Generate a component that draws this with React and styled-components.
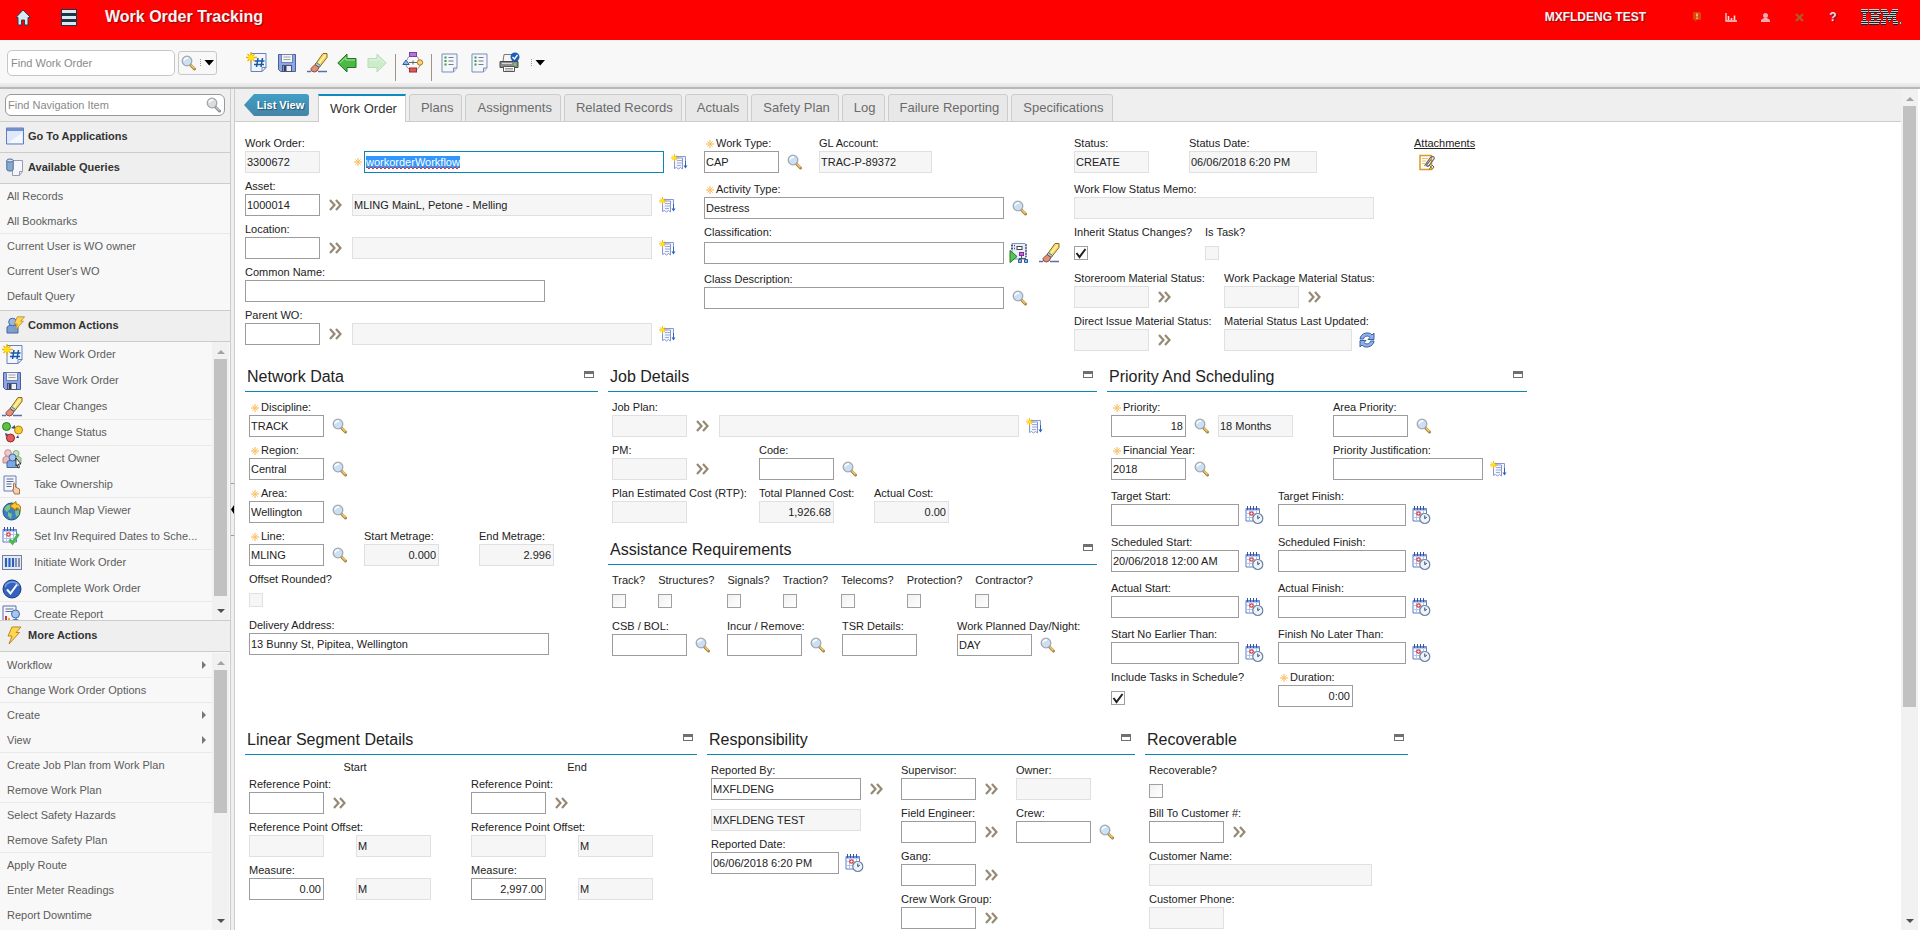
import React, { useEffect, useId, useRef } from "react";
import styled, { createGlobalStyle, css } from "styled-components";

const GlobalStyle = createGlobalStyle`
  * { box-sizing: border-box; }
  body {
    margin: 0;
    background: #fff;
    color: #222;
    font: 11px/15px "Liberation Sans", Arial, sans-serif;
  }
  button, input { font: inherit; color: inherit; }
  button { margin: 0; padding: 0; border: 0; background: none; cursor: pointer; }
  svg { display: block; flex: none; }
`;

/* ---------- icons ---------- */

const Svg = ({ w = 20, h = w, children }) => (
  <svg width={w} height={h} viewBox={`0 0 ${w} ${h}`} fill="none" aria-hidden="true">{children}</svg>
);

const Spark = () => (
  <g>
    <path d="M5 0v11M0 5.500h11M1.500 2l7 7M8.500 2l-7 7" stroke="#f5b000" strokeWidth="1.300" />
    <circle cx="5" cy="5.500" r="2.500" fill="#ffe600" />
  </g>
);

const NewIcon = () => (
  <Svg w={22} h={21}>
    <path d="M5 1.500h15v14l-4 4H5z" fill="#f3f6ff" stroke="#6a83b5" />
    <path d="M20 15.500h-4v4z" fill="#fff" stroke="#6a83b5" />
    <path d="M12 6l-1.500 9M16.500 6L15 15M8.500 9h10M8 12.500h10" stroke="#1659a8" strokeWidth="1.500" />
    <Spark />
  </Svg>
);

const SaveIcon = () => (
  <Svg>
    <path d="M1.500 1.500h17v17h-15l-2-2z" fill="#8ba6e2" stroke="#4a5f9c" />
    <rect x="4.500" y="1.500" width="11" height="8" fill="#f4f4f4" stroke="#7082b4" />
    <path d="M6.500 4h7M6.500 6.500h7" stroke="#a3a3a3" />
    <rect x="5.500" y="12.500" width="9" height="6" fill="#eef0f5" stroke="#47537a" />
    <path d="M8 13v5" stroke="#333f66" strokeWidth="3" />
  </Svg>
);

const EraserIcon = () => (
  <Svg w={21} h={20}>
    <path d="M0 18.500h4M11 18.500h9" stroke="#5870a8" strokeWidth="1.500" />
    <path d="M16 .5h4v4L12.500 14l-4-3z" fill="#f8d867" stroke="#8a6b1e" />
    <path d="M18.300 2L11 11.500" stroke="#fff3b8" strokeWidth="1.300" />
    <path d="M9.500 9.500l4 3-1.500 2-4-3z" fill="#a9cfcc" stroke="#4f7775" />
    <path d="M8 11.500l4 3-2 3.500-2.500 1-3-1L4 15.500z" fill="#df907b" stroke="#8c4536" />
  </Svg>
);

const ArrowIcon = ({ pale, flip }) => (
  <Svg>
    <g transform={flip ? "matrix(-1 0 0 1 20 0)" : undefined}>
      <path d="M.8 10L10 1v4.500h9v9h-9V19z" fill={pale ? "#cdeccb" : "#4db845"} stroke={pale ? "#b4dfb3" : "#1a7a1c"} />
      <path d="M3 10l6-5.500V7h9" stroke={pale ? "#e3f6e2" : "#a6e79a"} />
    </g>
  </Svg>
);

const FlowIcon = () => (
  <Svg w={22} h={21}>
    <path d="M5 8c1-3 2-4 5-5M17 8c-1-3-2-4-4-5M4 13c1 3 3 4 5 5M18 13c-1 3-2 4-4 5" stroke="#999" />
    <path d="M7 10.500h8M11 8.500v4" stroke="#666" />
    <rect x="7.500" y=".5" width="7" height="4" fill="#b276d8" stroke="#7b3ea7" />
    <path d="M.8 12.500L4 8l3.200 4.500z" fill="#8db7ea" stroke="#2d5fa5" />
    <circle cx="18" cy="10.500" r="2.700" fill="#f9d27a" stroke="#b57a12" />
    <rect x="7.500" y="16" width="7" height="4" fill="#dd5b5b" stroke="#a22a2a" />
  </Svg>
);

const ReportIcon = () => (
  <Svg w={17} h={20}>
    <path d="M1 1h15v14l-3.500 4H1z" fill="#f4f6fd" stroke="#7c8db5" />
    <path d="M16 15h-3.500v4" fill="#dde3f2" stroke="#7c8db5" />
    <path d="M3.500 4.500h2M3.500 8h2M3.500 11.500h2" stroke="#3b9c3b" strokeWidth="2" />
    <path d="M7.500 4.500h5M7.500 8h5M7.500 11.500h5" stroke="#7b7b7b" />
  </Svg>
);

const PrinterIcon = () => (
  <Svg w={21} h={21}>
    <path d="M5 2.500h10l1 7H4z" fill="#f5f5f5" stroke="#777" />
    <path d="M1 9.500h18v6H1z" fill="#8c8c8c" stroke="#484848" />
    <path d="M3 11.500h10" stroke="#d8d8d8" />
    <path d="M15 12.500h2" stroke="#5ee05e" strokeWidth="2" />
    <path d="M4.500 14.500h11v5h-11z" fill="#fff" stroke="#555" />
    <path d="M6 16.500h8M6 18h8" stroke="#999" />
    <circle cx="16" cy="5" r="4.500" fill="#1c5fb5" />
    <path d="M13.500 5l2 2 3-4" stroke="#fff" strokeWidth="1.300" />
  </Svg>
);

const SearchIcon = ({ gray }) => (
  <Svg w={15} h={16}>
    <path d="M9 9.500l4.500 4.500" stroke={gray ? "#8c8c8c" : "#a98543"} strokeWidth="3" strokeLinecap="round" />
    <path d="M10 10l3.500 3.500" stroke={gray ? "#c9c9c9" : "#f5cb69"} strokeWidth="1.500" />
    <circle cx="6" cy="6" r="4.800" fill={gray ? "#dcdcdc" : "#cbe0f4"} stroke="#a3a8ae" strokeWidth="1.300" />
    <path d="M3 5.500C3.500 3.500 5 3 7 3" stroke="#fff" strokeWidth="1.400" />
  </Svg>
);

const DetailIcon = () => (
  <Svg w={13} h={12}>
    <path d="M1 1l4.500 5L1 11M7 1l4.500 5L7 11" stroke="#978974" strokeWidth="2.200" />
  </Svg>
);

const NoteIcon = () => (
  <Svg w={17} h={17}>
    <path d="M4 2.500h10.500v6M3.500 4v10.500l2-1 2 1.500 2-1.500 2 1.500V4z" fill="#f2f5fd" stroke="#8698cf" />
    <path d="M6 6.500h5M6 9h5M6 11.500h4" stroke="#9dacd6" />
    <path d="M14.500 7v6" stroke="#2f62bd" />
    <path d="M12.500 11.500h4l-2 3z" fill="#2f62bd" />
    <g transform="scale(.7)"><Spark /></g>
  </Svg>
);

const CalendarIcon = ({ check }) => (
  <Svg w={19} h={19}>
    <path d="M1 2.500h13.500V15H1z" fill="#fff" stroke="#5a7cc8" />
    <path d="M1 3.500h13.500" stroke="#7d9ade" strokeWidth="2" />
    <path d="M2.500 0v4M5.500 0v4M8.500 0v4M11.500 0v4" stroke="#35569f" />
    <path d="M1 7.500h13M1 11.500h13M4.500 5v10M8 5v10M11.500 5v10" stroke="#b0c3ec" />
    <circle cx="6.500" cy="7.500" r="1.700" fill="#fff" stroke="#dd3838" strokeWidth="1.200" />
    {check ? (
      <path d="M7.500 12.500l3 3.500 6-9" stroke="#4fb551" strokeWidth="3" />
    ) : (
      <g>
        <circle cx="12.800" cy="12.500" r="5" fill="#eef4fb" stroke="#6b829e" strokeWidth="1.200" />
        <path d="M12.800 9.500v3.200l2-1.500" stroke="#33445c" />
      </g>
    )}
  </Svg>
);

const ClassifyIcon = () => (
  <Svg w={20} h={20}>
    <path d="M3 .5h13l1 1V15l-1 1H3z" fill="#e8eefa" stroke="#7f93bd" />
    <path d="M17 1v13M2 2.500h4M2 5.500h4" stroke="#4d5870" strokeDasharray="2 1" strokeWidth="1.300" />
    <rect x="8" y="3.500" width="5" height="3" fill="#fff" stroke="#444" />
    <path d="M1 7.500l7 6-7 6z" fill="#58c454" stroke="#1e7a20" />
    <path d="M12.500 12v4M10 15.500h7" stroke="#555" />
    <rect x="10.500" y="9.500" width="4" height="3" fill="#c06bd6" stroke="#7c2c94" />
    <path d="M9.500 16.500h3v3h-3zM15.500 16.500h3v3h-3z" fill="#8db7ee" stroke="#2d5fa5" />
  </Svg>
);

const RefreshIcon = () => (
  <Svg w={16} h={16}>
    <path d="M1 7c.5-6 9-8 12-4l2-2v6.500H9L11 5.500C9 3 5 4 4.500 7z" fill="#8fb1e6" stroke="#3a61a3" />
    <path d="M15 9c-.5 6-9 8-12 4l-2 2V8.500h6L5 10.500c2 2.500 6 1.500 6.500-1.500z" fill="#8fb1e6" stroke="#3a61a3" />
  </Svg>
);

const AttachIcon = () => (
  <Svg w={17} h={17}>
    <path d="M1 1.500h11.500v14H1z" fill="#fffdf4" stroke="#db9a25" strokeWidth="1.500" />
    <path d="M3 4.500h6M3 7h4M3 9.500h3" stroke="#e3c37c" />
    <path d="M5.500 12l6-8.500c2-2 4.500-.5 3.500 1.500l-5 6.500c-1.500 1.500-3 .5-2-1l4-5" stroke="#686868" strokeWidth="1.200" />
    <path d="M10 11l2 2-2 2.500M13 11l2 2-2 2.500" stroke="#6a6152" />
  </Svg>
);

const WindowIcon = () => (
  <Svg w={18} h={18}>
    <path d="M.5 1h17v16H.5z" fill="#dfe9fb" stroke="#5f7fb8" />
    <path d="M1 2.500h16" stroke="#6f8fce" strokeWidth="3" />
    <path d="M2 16L16 6v10z" fill="#f5f8ff" />
  </Svg>
);

const QueryIcon = () => (
  <Svg w={18} h={18}>
    <path d="M6.500 2.500h10v11l-3 4h-7z" fill="#f5f5fa" stroke="#9a9ab0" />
    <path d="M16.500 13.500h-3v4" stroke="#9a9ab0" />
    <path d="M.8 2.500v9c0 2 6.400 2 6.400 0v-9z" fill="#88a9cf" stroke="#4c6d99" />
    <ellipse cx="4" cy="2.500" rx="3.200" ry="1.500" fill="#d6e4f3" stroke="#4c6d99" />
  </Svg>
);

const Bolt = () => <path d="M8 1h9l-5 5.500h3.500L5 18l3-8H4z" fill="#ffd84d" stroke="#b9862a" />;
const BoltIcon = () => <Svg w={18} h={19}><g transform="translate(-2 0)"><Bolt /></g></Svg>;

const UserBoltIcon = () => (
  <Svg w={20} h={18}>
    <path d="M1 17v-6l3-2h5l3 2v6z" fill="#7d9fd6" stroke="#4466a3" />
    <circle cx="6.500" cy="6" r="3.800" fill="#9bb8e4" stroke="#4466a3" />
    <g transform="translate(5 0) scale(.8)"><Bolt /></g>
  </Svg>
);

const StatusIcon = () => (
  <Svg w={21} h={21}>
    <path d="M9 6l4-3v4zM16 13l-2 3 3 0zM3 11l3 1-2 3z" fill="#2c4f90" />
    <circle cx="4.500" cy="4.500" r="4" fill="#5cc244" stroke="#277d1b" />
    <circle cx="16.500" cy="8" r="4" fill="#f7cc35" stroke="#b0840b" />
    <circle cx="8.500" cy="16" r="4" fill="#e25b58" stroke="#9c2422" />
  </Svg>
);

const OwnerIcon = () => (
  <Svg w={20} h={20}>
    <path d="M1 14V9l3-2h4l3 2v5z" fill="#e8b9bd" stroke="#c18a90" />
    <circle cx="6" cy="4" r="3.300" fill="#efc8cb" stroke="#c18a90" />
    <path d="M10 13V9l3-2h3l3 2v5z" fill="#b5dab3" stroke="#7fae7c" />
    <circle cx="14" cy="4.500" r="3" fill="#c4e3c2" stroke="#7fae7c" />
    <path d="M5 18.500V13l3-2h5l3 2v5.500z" fill="#7ea8de" stroke="#3d67a5" />
    <circle cx="10.500" cy="8.500" r="3.500" fill="#a3c3ec" stroke="#3d67a5" />
    <path d="M14 9l5 6h-2.500l1 3.500-1.500.5-1-3.500-1 1.500z" fill="#fff" stroke="#111" strokeWidth=".8" />
  </Svg>
);

const OwnershipIcon = () => (
  <Svg w={19} h={20}>
    <path d="M2 1h12v15H2z" fill="#f3f6fd" stroke="#687fb3" />
    <path d="M4.500 4h7M4.500 6.500h7M4.500 9h5M4.500 11.500h5" stroke="#5b6b91" />
    <path d="M11.500 8.500c1-1 2 0 2 1.500v2l4 2v5h-5l-2-4.500h1z" fill="#f4cfb2" stroke="#a8734e" />
  </Svg>
);

const GlobeIcon = () => (
  <Svg w={20} h={20}>
    <circle cx="9.500" cy="10.500" r="8.500" fill="#3f7fc1" stroke="#1e4c80" />
    <path d="M2 8c2-4 5-5 7-4l-1 4-3 3zM6 11l4 2-1 5-3-3zM13 10l4-1v5l-3 2z" fill="#7cc486" />
    <path d="M8 5l6-4.500V3c4 0 5.500 3 4 7-1-2-2-3-4-3v2.500z" fill="#ffc52e" stroke="#a87608" />
  </Svg>
);

const BarcodeIcon = () => (
  <Svg w={20} h={15}>
    <rect x=".5" y=".5" width="19" height="14" fill="#e4ebf7" stroke="#73809b" />
    <path d="M4 3v9M7.500 3v9M11 3v9" stroke="#2c60bd" strokeWidth="2.200" />
    <path d="M14 3v9M17 3v9" stroke="#8392b0" strokeWidth="2" />
  </Svg>
);

const DoneIcon = () => (
  <Svg w={20} h={20}>
    <circle cx="10" cy="10" r="9" fill="#3362bf" stroke="#1c3c80" />
    <path d="M3 8c2-6 11-7 14-1" stroke="#7ea0e2" strokeWidth="1.500" />
    <path d="M5 10.500l3.500 4 6.500-9" stroke="#fff" strokeWidth="2" />
  </Svg>
);

const ChartDocIcon = () => (
  <Svg w={20} h={20}>
    <path d="M1 1h13v18H1z" fill="#f3f6fd" stroke="#5670aa" />
    <path d="M3.500 4h8M3.500 6.500h8" stroke="#5b6b91" />
    <path d="M4 11v6" stroke="#d33" strokeWidth="2" />
    <path d="M7 13v4" stroke="#e6ae22" strokeWidth="2" />
    <circle cx="13.500" cy="9" r="4" fill="#a8c6ec" stroke="#3d67a5" />
    <path d="M8 19c0-6 11-6 11 0z" fill="#86a9da" stroke="#3d67a5" />
  </Svg>
);

const HomeIcon = () => (
  <Svg w={16} h={17}>
    <path d="M8 1L1 8.500h2V16h3.500v-5h3v5H13V8.500h2.500z" fill="#dce8ef" stroke="#26455c" />
  </Svg>
);

const MenuIcon = () => (
  <Svg w={16} h={17}>
    <path d="M0 0h16v17H0z" fill="#1c3648" />
    <path d="M1 1h14v3H1zM1 7h14v3H1zM1 13h14v3H1z" fill="#dfe8ee" />
  </Svg>
);

const BulletinIcon = () => (
  <Svg w={9} h={10}>
    <path d="M1 0h6l1 1v6l-1 1H4L2.500 10 2 8H1L0 7V1z" fill="#d8490c" />
    <path d="M4 1.500v3M4 5.500v1.500" stroke="#ffd7a0" strokeWidth="1.400" />
  </Svg>
);

const KpiIcon = () => (
  <Svg w={12} h={9}>
    <path d="M1 0v8h11" stroke="#f5dcdc" strokeWidth="1.300" />
    <path d="M3.500 3v4M6.500 5v2M9.500 2.500v4.500" stroke="#f5dcdc" strokeWidth="1.600" />
  </Svg>
);

const PersonIcon = () => (
  <Svg w={9} h={9}>
    <circle cx="4.500" cy="2.500" r="2.500" fill="#f1a9b4" />
    <path d="M0 9V7l3-2h3l3 2v2z" fill="#f1a9b4" />
  </Svg>
);

const SignOutIcon = () => (
  <Svg w={9} h={9}>
    <path d="M1 1l7 7M8 1L1 8" stroke="#b05a2c" strokeWidth="2.400" />
  </Svg>
);

const LogoMark = () => {
  const rows = [
    "0-7 8-18 20-26 31-37",
    "0-7 8-19 20-27 30-37",
    "2-5 10-13 16-20 22-28 29-35",
    "2-5 10-18 22-35",
    "2-5 10-18 22-25 26-31 32-35",
    "2-5 10-13 16-20 22-25 27-30 32-35",
    "0-7 8-19 20-25 28-29 32-37",
    "0-7 8-18 20-25 32-37",
  ];
  return (
    <Svg w={41} h={17}>
      {rows.map((row, y) =>
        row.split(" ").map((part) => {
          const [a, b] = part.split("-").map(Number);
          return (
            <g key={part}>
              <rect x={a} y={y * 2} width={b - a} height="1" fill="#c3cfd1" />
              <rect x={a} y={y * 2 + 1} width={b - a} height="1" fill="#14262b" />
            </g>
          );
        })
      )}
      <circle cx="39.500" cy="14" r="1.200" fill="#d9e4e6" stroke="#14262b" strokeWidth=".6" />
    </Svg>
  );
};

const RequiredMark = () => (
  <Svg w={8} h={8}>
    <path d="M4 0v8M0 4h8" stroke="#fbb040" />
    <path d="M1.300 1.300l5.400 5.400M6.700 1.300L1.300 6.700" stroke="#fcc36e" />
  </Svg>
);

const DropIcon = () => (
  <Svg w={14} h={8}>
    <path d="M.5 0v8" stroke="#999" strokeDasharray="1 1" />
    <path d="M4.500 1h9.500L9.200 6.500z" fill="#000" />
  </Svg>
);

const Triangle = ({ dir, color }) => (
  <Svg w={dir === "right" ? 4 : 8} h={dir === "right" ? 8 : 5}>
    <path d={{ up: "M0 5l4-4 4 4z", down: "M0 0l4 4 4-4z", right: "M0 0l4 4-4 4z" }[dir]} fill={color} />
  </Svg>
);

/* ---------- frame ---------- */

const Shell = styled.div`
  display: flex;
  flex-direction: column;
  height: 100vh;
  min-height: 600px;
  overflow: hidden;
`;

const Header = styled.header`
  flex: none;
  display: flex;
  align-items: center;
  height: 40px;
  padding: 0 18px 6px 15px;
  background: #fe0000;
  color: #f4f4f4;
`;

const HeaderButton = styled.button`
  display: flex;
  justify-content: center;
  width: 16px;
  margin-right: ${(p) => p.$after || 0}px;
`;

const AppTitle = styled.h1`
  flex: 1;
  margin: 0;
  font-size: 16px;
  line-height: 20px;
  text-shadow: 1px 1px 1px #7a1010;
`;

const UserName = styled.span`
  margin-right: 43px;
  font-size: 12px;
  font-weight: bold;
  text-shadow: 1px 1px 1px #7a1010;
`;

const HeaderTools = styled.nav`
  display: flex;
  align-items: center;
  gap: 18px;
  margin-right: 20px;
`;

const HelpMark = styled.b`
  font-size: 12px;
  color: #f3d9e0;
  text-shadow: 1px 1px 0 #7a2a44;
`;

const Toolbar = styled.div`
  flex: none;
  display: flex;
  align-items: center;
  height: 49px;
  padding: 0 7px 2px;
  background: linear-gradient(#f8f8f8 43px, #efefef 43px, #e2e2e2 47px);
  border-bottom: 2px solid #b8b8b8;
`;

const ToolSearch = styled.input`
  width: 168px;
  height: 26px;
  margin-right: 3px;
  padding: 0 3px;
  border: 1px solid #c6c6c6;
  border-radius: 5px;
  background: #fff;
  &::placeholder { color: #8a8a8a; }
`;

const SplitButton = styled.button`
  display: flex;
  align-items: center;
  justify-content: space-between;
  width: 39px;
  height: 24px;
  margin-right: 25px;
  padding: 0 2px;
  border: 1px solid #c8c8c8;
  border-radius: 3px;
`;

const ToolButton = styled.button`
  display: flex;
  align-items: center;
  justify-content: center;
  width: ${(p) => p.$w || 30}px;
  height: 26px;
`;

const Divider = styled.span`
  align-self: flex-end;
  width: 1px;
  height: 27px;
  margin: 0 2px 4px 3px;
  background: #9a9686;
`;

const Body = styled.div`
  flex: 1;
  display: flex;
  min-height: 0;
`;

const Sidebar = styled.aside`
  flex: none;
  display: flex;
  flex-direction: column;
  width: 230px;
  background: #f8f8f8;
`;

const NavSearch = styled.div`
  flex: none;
  height: 33px;
  padding: 5px;
  border-bottom: 1px solid #ccc;
  background: #efefef;
`;

const NavSearchBox = styled.div`
  display: flex;
  align-items: center;
  height: 22px;
  padding-right: 3px;
  border: 1px solid #999;
  border-radius: 6px;
  background: #fff;
`;

const NavSearchInput = styled.input`
  flex: 1;
  min-width: 0;
  padding: 0 2px;
  border: 0;
  outline: 0;
  background: transparent;
  &::placeholder { color: #8a8a8a; }
`;

const NavHead = styled.button`
  flex: none;
  display: flex;
  align-items: center;
  height: ${(p) => (p.$ruled ? 32 : 31)}px;
  padding: 0 0 2px 6px;
  border-top: ${(p) => (p.$ruled ? "1px solid #ccc" : "0")};
  border-bottom: 1px solid #ccc;
  background: #efefef;
  color: #333;
  font-weight: bold;
`;

const NavHeadIcon = styled.span`
  width: 22px;
`;

const NavPane = styled.div`
  display: flex;
  overflow: hidden;
  flex: ${(p) => (p.$fill ? "1 1 0" : "none")};
  height: ${(p) => (p.$h ? `${p.$h}px` : "auto")};
  padding-top: ${(p) => (p.$fill ? 1 : 0)}px;
`;

const NavList = styled.ul`
  flex: 1;
  min-width: 0;
  margin: 0;
  padding: 0;
  list-style: none;
`;

const NavItem = styled.li`
  border-bottom: 1px solid ${(p) => (p.$line ? "#e9e9e9" : "transparent")};
`;

const NavLink = styled.button`
  display: flex;
  align-items: center;
  width: 100%;
  height: ${(p) => (p.$icon ? 25 : 24)}px;
  padding: 0 6px 0 ${(p) => (p.$icon ? 2 : 7)}px;
  color: #5c5c5c;
  text-align: left;
  white-space: nowrap;
`;

const NavIcon = styled.span`
  flex: none;
  width: 32px;
`;

const NavText = styled.span`
  flex: 1;
`;

const Track = styled.div`
  flex: none;
  display: flex;
  flex-direction: column;
  align-items: center;
  width: 17px;
  padding: 7px 0 6px;
  background: #f1f1f1;
  margin-right: ${(p) => p.$edge}px;
`;

const Thumb = styled.div`
  flex: 0 1 ${(p) => p.$h}px;
  width: 13px;
  margin: 5px 0 auto;
  background: #c1c1c1;
`;

const ScrollRail = ({ h, edge = 1 }) => (
  <Track $edge={edge} aria-hidden="true">
    <Triangle dir="up" color="#a3a3a3" />
    <Thumb $h={h} />
    <Triangle dir="down" color="#505050" />
  </Track>
);

const Splitter = styled.div`
  flex: none;
  display: flex;
  align-items: center;
  width: 5px;
  border: solid #ccc;
  border-width: 0 1px;
  background: #efefef;
`;

const SplitterHandle = styled.button`
  width: 3px;
  height: 53px;
  border: solid #999;
  border-width: 1px 0;
`;

const Main = styled.main`
  flex: 1;
  display: flex;
  min-width: 0;
`;

const Work = styled.div`
  flex: 1;
  min-width: 0;
  overflow: hidden;
`;

const TabBar = styled.div`
  display: flex;
  align-items: flex-end;
  height: 33px;
  padding-left: 9px;
  background: #efefef;
  box-shadow: inset 0 -1px #ccc;
`;

const ListButton = styled.button`
  align-self: flex-start;
  width: 65px;
  height: 22px;
  margin: 5px 9px 0 0;
  padding-left: 8px;
  border-radius: 0 3px 3px 0;
  background: linear-gradient(#3f9fc6, #4684a5);
  clip-path: polygon(0 50%, 10px 0, 100% 0, 100% 100%, 10px 100%);
  color: #fff;
  font-weight: bold;
  text-shadow: 1px 1px 1px #24546d;
`;

const Tab = styled.button`
  height: 28px;
  margin-right: 3px;
  padding: 0 8px 1px 11px;
  border: 1px solid #ccc;
  border-radius: 3px 3px 0 0;
  background: #e8e8e8;
  color: #6b6b6b;
  font-size: 13px;
  white-space: nowrap;
  ${(p) =>
    p.$active &&
    css`
      border-width: 2px 1px 0;
      border-top-color: #0b8bc2;
      border-bottom: 0;
      border-radius: 0;
      background: #fff;
      color: #333;
    `}
`;

/* ---------- form ---------- */

const Form = styled.form`
  padding: 8px 0 0 10px;
`;

const Overview = styled.div`
  display: flex;
`;

const OverviewColumn = styled.div`
  flex: 0 0 ${(p) => p.$w}px;
`;

const SectionRow = styled.div`
  display: flex;
  gap: 10px;
  margin-top: ${(p) => p.$top}px;
`;

const SectionColumn = styled.div`
  flex: 0 0 ${(p) => p.$w}px;
  min-width: 0;
  display: flex;
  flex-direction: column;
  gap: 12px;
`;

const SectionHead = styled.div`
  display: flex;
  align-items: center;
  justify-content: space-between;
  height: 30px;
  padding: 0 4px 0 2px;
  border-bottom: 1px solid #0b86b8;
`;

const SectionTitle = styled.h2`
  margin: 0;
  font-size: 16px;
  font-weight: normal;
  line-height: 20px;
`;

const Collapse = styled.button`
  width: 10px;
  height: 7px;
  margin-bottom: 4px;
  border: 1px solid #707070;
  border-top-width: 3px;
`;

const SectionBody = styled.div`
  padding: 2px 4px 0;
`;

const Row = styled.div`
  display: flex;
  gap: ${(p) => p.$gap || 8}px;
  margin-top: ${(p) => (p.$lead ? 3 : 0)}px;
`;

const Cell = styled.div`
  flex: 0 0 ${(p) => (p.$col ? `${p.$col}px` : "auto")};
  white-space: nowrap;
`;

const Label = styled.label`
  display: flex;
  align-items: center;
  height: 21px;
  padding-top: 6px;
`;

const MarkBox = styled.span`
  display: flex;
  justify-content: center;
  width: 12px;
`;

const Controls = styled.div`
  display: flex;
  align-items: center;
  height: ${(p) => (p.$tall ? 26 : 22)}px;
`;

const Box = styled.input`
  width: ${(p) => p.$w}px;
  height: 22px;
  padding: 0 2px 0 1px;
  border: 1px solid ${(p) => (p.readOnly ? "#e0e0e0" : "#9c9c9c")};
  border-radius: 0;
  outline: 0;
  background: ${(p) => (p.readOnly ? "#f6f6f6" : "#fff")};
  text-align: ${(p) => (p.$num ? "right" : "left")};
  &:focus { border-color: #0b86b8; }
  &::selection { background: #3297fd; color: #fff; }
`;

const Slot = styled.button`
  display: flex;
  justify-content: center;
  width: ${(p) => p.$w || 32}px;
  padding-right: 2px;
`;

const Spacer = styled.span`
  width: 32px;
`;

const Check = styled.input`
  appearance: none;
  width: 14px;
  height: 14px;
  margin: 4px 0 0;
  border: 1px solid ${(p) => (p.disabled ? "#e0e0e0" : "#a0a0a0")};
  background: ${(p) => (p.disabled ? "#f6f6f6" : "linear-gradient(135deg, #f1f1f1, #fff)")};
  &:checked {
    background: url("data:image/svg+xml,%3Csvg xmlns='http://www.w3.org/2000/svg' viewBox='0 0 12 12'%3E%3Cpath d='M1.500 6l3 4 6-8' fill='none' stroke='%23222' stroke-width='2'/%3E%3C/svg%3E");
  }
`;

const Underlined = styled.div`
  position: relative;
`;

const Squiggle = styled.span`
  position: absolute;
  left: 2px;
  bottom: 4px;
  width: 94px;
  height: 2px;
  pointer-events: none;
  background:
    repeating-linear-gradient(90deg, #e0303a 0 2px, transparent 2px 4px) 0 0 / 100% 1px no-repeat,
    repeating-linear-gradient(90deg, transparent 0 2px, #e0303a 2px 4px) 0 1px / 100% 1px no-repeat;
`;

const Heading = styled.div`
  width: 212px;
  height: 14px;
  line-height: 20px;
  text-align: center;
`;

const Stack = styled.div`
  margin-top: 9px;
`;

const AttachLink = styled.a`
  display: block;
  width: 62px;
  padding-top: 6px;
  color: #222;
`;

const AttachButton = styled.button`
  margin: 3px 0 0 5px;
`;

const ICONS = {
  search: [SearchIcon, "Select value"],
  detail: [DetailIcon, "Detail menu"],
  note: [NoteIcon, "Long description"],
  date: [CalendarIcon, "Select date"],
  refresh: [RefreshIcon, "Refresh"],
  classify: [ClassifyIcon, "Classify"],
  erase: [EraserIcon, "Clear"],
};

function IconSlot({ name, w }) {
  if (!name) return <Spacer />;
  const [Icon, title] = ICONS[name];
  return <Slot type="button" aria-label={title} $w={w}><Icon /></Slot>;
}

function Field({ label, req, value = "", w = 75, ro, num, icon, icon2, col, more, moreW = 300, moreIcon }) {
  const id = useId();
  return (
    <Cell $col={col}>
      <Label htmlFor={id}>{req && <MarkBox><RequiredMark /></MarkBox>}{label}</Label>
      <Controls $tall={!!icon2}>
        <Box id={id} $w={w} $num={num} readOnly={ro} defaultValue={value} />
        <IconSlot name={icon} />
        {icon2 && <IconSlot name={icon2} w={28} />}
        {more !== undefined && (
          <>
            <Box $w={moreW} readOnly defaultValue={more} aria-label={`${label} description`} />
            <IconSlot name={moreIcon} />
          </>
        )}
      </Controls>
    </Cell>
  );
}

function CheckField({ label, checked, disabled, col }) {
  const id = useId();
  return (
    <Cell $col={col}>
      <Label htmlFor={id}>{label}</Label>
      <Controls><Check type="checkbox" id={id} defaultChecked={checked} disabled={disabled} /></Controls>
    </Cell>
  );
}

function Section({ title, children }) {
  return (
    <section>
      <SectionHead>
        <SectionTitle>{title}</SectionTitle>
        <Collapse type="button" aria-label={`Collapse ${title}`} />
      </SectionHead>
      <SectionBody>{children}</SectionBody>
    </section>
  );
}

function WorkOrderRow() {
  const id = useId();
  const ref = useRef(null);
  useEffect(() => {
    ref.current.focus();
    ref.current.select();
  }, []);
  return (
    <Cell>
      <Label htmlFor={id}>Work Order:</Label>
      <Controls>
        <Box id={id} $w={75} readOnly defaultValue="3300672" />
        <Spacer />
        <MarkBox><RequiredMark /></MarkBox>
        <Underlined>
          <Box ref={ref} $w={300} defaultValue="workorderWorkflow" spellCheck={false} aria-label="Work order description" />
          <Squiggle />
        </Underlined>
        <IconSlot name="note" />
      </Controls>
    </Cell>
  );
}

/* ---------- data ---------- */

const queries = ["All Records", "All Bookmarks", "Current User is WO owner", "Current User's WO", "Default Query"];

const commonActions = [
  ["New Work Order", NewIcon],
  ["Save Work Order", SaveIcon],
  ["Clear Changes", EraserIcon, true],
  ["Change Status", StatusIcon, true],
  ["Select Owner", OwnerIcon],
  ["Take Ownership", OwnershipIcon, true],
  ["Launch Map Viewer", GlobeIcon],
  ["Set Inv Required Dates to Sche...", () => <CalendarIcon check />, true],
  ["Initiate Work Order", BarcodeIcon],
  ["Complete Work Order", DoneIcon, true],
  ["Create Report", ChartDocIcon],
];

const moreActions = [
  ["Workflow", true, true],
  ["Change Work Order Options", true],
  ["Create", false, true],
  ["View", true, true],
  ["Create Job Plan from Work Plan"],
  ["Remove Work Plan", true],
  ["Select Safety Hazards"],
  ["Remove Safety Plan", true],
  ["Apply Route"],
  ["Enter Meter Readings"],
  ["Report Downtime"],
];

const tabs = ["Work Order", "Plans", "Assignments", "Related Records", "Actuals", "Safety Plan", "Log", "Failure Reporting", "Specifications"];

const datePairs = [
  ["Target Start:", "Target Finish:"],
  ["Scheduled Start:", "Scheduled Finish:", "20/06/2018 12:00 AM"],
  ["Actual Start:", "Actual Finish:"],
  ["Start No Earlier Than:", "Finish No Later Than:"],
];

const assistance = ["Track?", "Structures?", "Signals?", "Traction?", "Telecoms?", "Protection?", "Contractor?"];

/* ---------- page ---------- */

function Segment({ title, measure }) {
  return (
    <div>
      <Heading>{title}</Heading>
      <Field label="Reference Point:" icon="detail" />
      <Field label="Reference Point Offset:" ro more="M" moreW={75} />
      <Field label="Measure:" value={measure} num more="M" moreW={75} />
    </div>
  );
}

function Navigation() {
  return (
    <Sidebar>
      <NavSearch>
        <NavSearchBox>
          <NavSearchInput placeholder="Find Navigation Item" aria-label="Find Navigation Item" />
          <button type="button" aria-label="Search navigation"><SearchIcon gray /></button>
        </NavSearchBox>
      </NavSearch>
      <NavHead><NavHeadIcon><WindowIcon /></NavHeadIcon>Go To Applications</NavHead>
      <NavHead><NavHeadIcon><QueryIcon /></NavHeadIcon>Available Queries</NavHead>
      <NavPane $h={126}>
        <NavList>
          {queries.map((q, i) => (
            <NavItem key={q} $line={i === 1}><NavLink><NavText>{q}</NavText></NavLink></NavItem>
          ))}
        </NavList>
      </NavPane>
      <NavHead $ruled><NavHeadIcon><UserBoltIcon /></NavHeadIcon>Common Actions</NavHead>
      <NavPane $h={278}>
        <NavList>
          {commonActions.map(([text, Icon, line]) => (
            <NavItem key={text} $line={line}>
              <NavLink $icon><NavIcon><Icon /></NavIcon><NavText>{text}</NavText></NavLink>
            </NavItem>
          ))}
        </NavList>
        <ScrollRail h={237} />
      </NavPane>
      <NavHead $ruled><NavHeadIcon><BoltIcon /></NavHeadIcon>More Actions</NavHead>
      <NavPane $fill>
        <NavList>
          {moreActions.map(([text, line, sub]) => (
            <NavItem key={text} $line={line}>
              <NavLink><NavText>{text}</NavText>{sub && <Triangle dir="right" color="#777" />}</NavLink>
            </NavItem>
          ))}
        </NavList>
        <ScrollRail h={143} />
      </NavPane>
    </Sidebar>
  );
}

function WorkOrderForm() {
  return (
    <Form onSubmit={(e) => e.preventDefault()}>
      <Overview>
        <OverviewColumn $w={459}>
          <WorkOrderRow />
          <Field label="Asset:" value="1000014" icon="detail" more="MLING MainL, Petone - Melling" moreIcon="note" />
          <Field label="Location:" icon="detail" more="" moreIcon="note" />
          <Field label="Common Name:" w={300} />
          <Field label="Parent WO:" icon="detail" more="" moreIcon="note" />
        </OverviewColumn>
        <OverviewColumn $w={370}>
          <Row>
            <Field label="Work Type:" req value="CAP" icon="search" />
            <Field label="GL Account:" ro value="TRAC-P-89372" w={113} />
          </Row>
          <Row $lead><Field label="Activity Type:" req value="Destress" w={300} icon="search" /></Row>
          <Field label="Classification:" w={300} icon="classify" icon2="erase" />
          <Field label="Class Description:" w={300} icon="search" />
        </OverviewColumn>
        <OverviewColumn $w={340}>
          <Row>
            <Field label="Status:" ro value="CREATE" />
            <Field label="Status Date:" ro value="06/06/2018 6:20 PM" w={128} />
          </Row>
          <Row $lead><Field label="Work Flow Status Memo:" ro w={300} /></Row>
          <Row $gap={13}>
            <CheckField label="Inherit Status Changes?" checked />
            <CheckField label="Is Task?" disabled />
          </Row>
          <Row $lead>
            <Field label="Storeroom Material Status:" ro icon="detail" col={142} />
            <Field label="Work Package Material Status:" ro icon="detail" />
          </Row>
          <Row>
            <Field label="Direct Issue Material Status:" ro icon="detail" col={142} />
            <Field label="Material Status Last Updated:" ro w={128} icon="refresh" />
          </Row>
        </OverviewColumn>
        <div>
          <AttachLink href="#attachments">Attachments</AttachLink>
          <AttachButton type="button" aria-label="View attachments"><AttachIcon /></AttachButton>
        </div>
      </Overview>

      <SectionRow $top={11}>
        <SectionColumn $w={353}>
          <Section title="Network Data">
            <Field label="Discipline:" req value="TRACK" icon="search" />
            <Field label="Region:" req value="Central" icon="search" />
            <Field label="Area:" req value="Wellington" icon="search" />
            <Row>
              <Field label="Line:" req value="MLING" icon="search" />
              <Field label="Start Metrage:" ro num value="0.000" />
              <Field label="End Metrage:" ro num value="2.996" />
            </Row>
            <CheckField label="Offset Rounded?" disabled />
            <Row $lead><Field label="Delivery Address:" value="13 Bunny St, Pipitea, Wellington" w={300} /></Row>
          </Section>
        </SectionColumn>
        <SectionColumn $w={489}>
          <Section title="Job Details">
            <Field label="Job Plan:" ro icon="detail" more="" moreIcon="note" />
            <Row>
              <Field label="PM:" ro icon="detail" col={139} />
              <Field label="Code:" icon="search" />
            </Row>
            <Row>
              <Field label="Plan Estimated Cost (RTP):" ro col={139} />
              <Field label="Total Planned Cost:" ro num value="1,926.68" />
              <Field label="Actual Cost:" ro num value="0.00" />
            </Row>
          </Section>
          <Section title="Assistance Requirements">
            <Row $gap={13}>
              {assistance.map((label) => <CheckField key={label} label={label} />)}
            </Row>
            <Row $lead>
              <Field label="CSB / BOL:" icon="search" />
              <Field label="Incur / Remove:" icon="search" />
              <Field label="TSR Details:" />
              <Field label="Work Planned Day/Night:" value="DAY" icon="search" />
            </Row>
          </Section>
        </SectionColumn>
        <SectionColumn $w={420}>
          <Section title="Priority And Scheduling">
            <Row>
              <Field label="Priority:" req num value="18" icon="search" more="18 Months" moreW={75} />
              <Field label="Area Priority:" icon="search" />
            </Row>
            <Row>
              <Field label="Financial Year:" req value="2018" icon="search" col={214} />
              <Field label="Priority Justification:" w={150} icon="note" />
            </Row>
            {datePairs.map(([a, b, value]) => (
              <Row key={a} $lead $gap={7}>
                <Field label={a} value={value} w={128} icon="date" />
                <Field label={b} w={128} icon="date" />
              </Row>
            ))}
            <Row $gap={7}>
              <CheckField label="Include Tasks in Schedule?" checked col={160} />
              <Field label="Duration:" req num value="0:00" />
            </Row>
          </Section>
        </SectionColumn>
      </SectionRow>

      <SectionRow $top={18}>
        <SectionColumn $w={452}>
          <Section title="Linear Segment Details">
            <Row>
              <Segment title="Start" measure="0.00" />
              <Segment title="End" measure="2,997.00" />
            </Row>
          </Section>
        </SectionColumn>
        <SectionColumn $w={428}>
          <Section title="Responsibility">
            <Row>
              <div>
                <Field label="Reported By:" value="MXFLDENG" w={150} icon="detail" />
                <Stack><Box $w={150} readOnly defaultValue="MXFLDENG TEST" aria-label="Reported by name" /></Stack>
                <Field label="Reported Date:" value="06/06/2018 6:20 PM" w={128} icon="date" />
              </div>
              <div>
                <Row>
                  <Field label="Supervisor:" icon="detail" />
                  <Field label="Owner:" ro />
                </Row>
                <Row>
                  <Field label="Field Engineer:" icon="detail" />
                  <Field label="Crew:" icon="search" />
                </Row>
                <Field label="Gang:" icon="detail" />
                <Field label="Crew Work Group:" icon="detail" />
              </div>
            </Row>
          </Section>
        </SectionColumn>
        <SectionColumn $w={263}>
          <Section title="Recoverable">
            <CheckField label="Recoverable?" />
            <Field label="Bill To Customer #:" icon="detail" />
            <Field label="Customer Name:" ro w={225} />
            <Field label="Customer Phone:" ro />
          </Section>
        </SectionColumn>
      </SectionRow>
    </Form>
  );
}

export default function App() {
  return (
    <Shell>
      <GlobalStyle />
      <Header>
        <HeaderButton $after={30} aria-label="Home"><HomeIcon /></HeaderButton>
        <HeaderButton $after={28} aria-label="Menu"><MenuIcon /></HeaderButton>
        <AppTitle>Work Order Tracking</AppTitle>
        <UserName>MXFLDENG TEST</UserName>
        <HeaderTools>
          <HeaderButton aria-label="Bulletins"><BulletinIcon /></HeaderButton>
          <HeaderButton aria-label="Reports"><KpiIcon /></HeaderButton>
          <HeaderButton aria-label="Profile"><PersonIcon /></HeaderButton>
          <HeaderButton aria-label="Sign out"><SignOutIcon /></HeaderButton>
          <HeaderButton aria-label="Help"><HelpMark>?</HelpMark></HeaderButton>
        </HeaderTools>
        <LogoMark />
      </Header>
      <Toolbar>
        <ToolSearch placeholder="Find Work Order" aria-label="Find Work Order" />
        <SplitButton aria-label="Search"><SearchIcon /><DropIcon /></SplitButton>
        <ToolButton aria-label="New work order"><NewIcon /></ToolButton>
        <ToolButton aria-label="Save work order"><SaveIcon /></ToolButton>
        <ToolButton aria-label="Clear changes"><EraserIcon /></ToolButton>
        <ToolButton aria-label="Previous record"><ArrowIcon /></ToolButton>
        <ToolButton aria-label="Next record"><ArrowIcon pale flip /></ToolButton>
        <Divider />
        <ToolButton aria-label="Route workflow"><FlowIcon /></ToolButton>
        <Divider />
        <ToolButton aria-label="Report"><ReportIcon /></ToolButton>
        <ToolButton aria-label="Details report"><ReportIcon /></ToolButton>
        <ToolButton aria-label="Print"><PrinterIcon /></ToolButton>
        <ToolButton $w={28} aria-label="More tools"><DropIcon /></ToolButton>
      </Toolbar>
      <Body>
        <Navigation />
        <Splitter>
          <SplitterHandle aria-label="Collapse navigation">
            <Svg w={3} h={9}><path d="M3 0v9L0 4.500z" fill="#000" /></Svg>
          </SplitterHandle>
        </Splitter>
        <Main>
          <Work>
            <TabBar role="tablist">
              <ListButton>List View</ListButton>
              {tabs.map((t, i) => (
                <Tab key={t} role="tab" aria-selected={i === 0} $active={i === 0}>{t}</Tab>
              ))}
            </TabBar>
            <WorkOrderForm />
          </Work>
          <ScrollRail h={601} edge={2} />
        </Main>
      </Body>
    </Shell>
  );
}
